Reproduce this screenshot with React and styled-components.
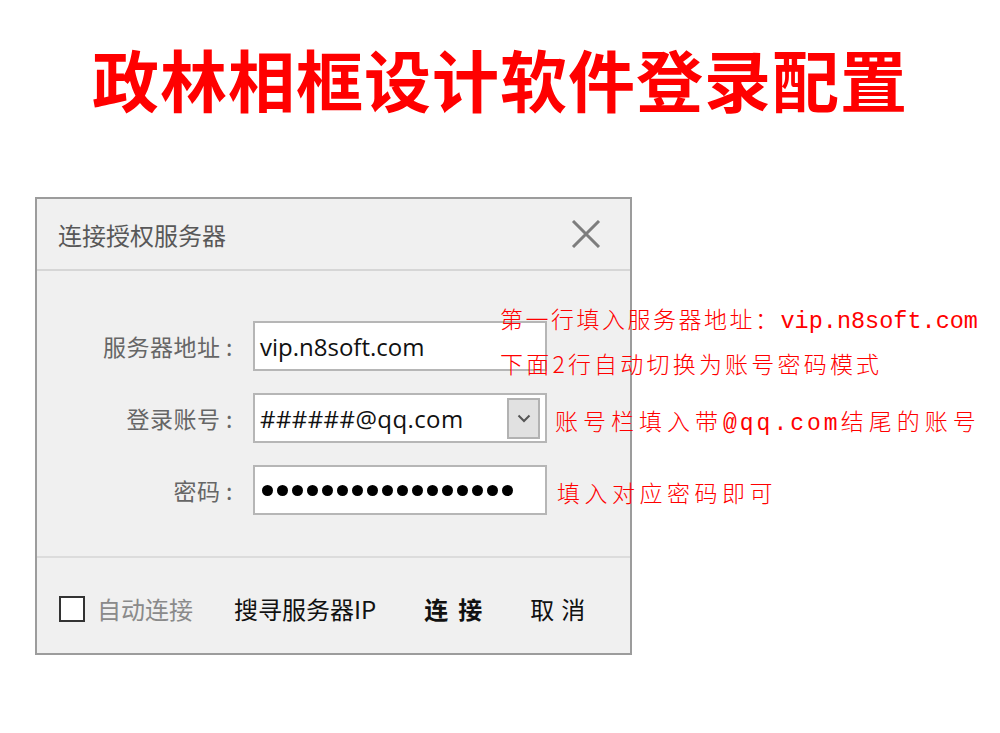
import React from "react";
import styled, { createGlobalStyle } from "styled-components";

const GlobalStyle = createGlobalStyle`
  html, body {
    margin: 0;
    padding: 0;
    background: #ffffff;
  }
  body {
    width: 1000px;
    height: 733px;
    overflow: hidden;
    font-family: "Noto Sans CJK SC", "Noto Sans", sans-serif;
  }
`;

const Page = styled.div`
  position: relative;
  box-sizing: border-box;
  width: 1000px;
  height: 733px;
  padding-top: 38px;
  background: #fff;
`;

const Title = styled.h1`
  margin: 0;
  height: 80px;
  line-height: 80px;
  text-align: center;
  font-family: "Noto Sans CJK SC", sans-serif;
  font-weight: 700;
  font-size: 67px;
  letter-spacing: 1px;
  color: #ff0000;
`;

const Dialog = styled.section`
  margin: 79px 0 0 35px;
  width: 593px;
  height: 454px;
  border: 2px solid #9c9c9c;
  background: #f0f0f0;
  display: flex;
  flex-direction: column;
`;

const Header = styled.header`
  height: 70px;
  flex: none;
  display: flex;
  align-items: center;
  justify-content: space-between;
  padding: 0 29px 0 21px;
  border-bottom: 2px solid #d6d6d6;
`;

const HeaderTitle = styled.span`
  font-size: 24px;
  color: #585858;
`;

const CloseButton = styled.button`
  border: none;
  background: transparent;
  padding: 0;
  width: 30px;
  height: 28px;
  display: flex;
  align-items: center;
  justify-content: center;
  cursor: pointer;
`;

const Body = styled.div`
  flex: none;
  display: grid;
  grid-template-columns: 196px 294px;
  grid-auto-rows: 50px;
  column-gap: 20px;
  row-gap: 22px;
  padding: 50px 0 41px 0;
  border-bottom: 2px solid #dcdcdc;
`;

const Label = styled.label`
  display: flex;
  align-items: center;
  justify-content: flex-end;
  font-size: 23px;
  color: #666;
  letter-spacing: 0.5px;
`;

const Field = styled.div`
  position: relative;
  box-sizing: border-box;
  height: 50px;
  border: 2px solid #b6b6b6;
  background: #fff;
  display: flex;
  align-items: center;
  justify-content: space-between;
  padding: 0 5px 0 5px;
`;

const FieldText = styled.span`
  font-family: "Open Sans", "Noto Sans", sans-serif;
  font-size: 24px;
  color: #111;
  letter-spacing: ${(p) => p.$spacing || "0px"};
`;

const DropButton = styled.span`
  box-sizing: border-box;
  width: 33px;
  height: 41px;
  border: 2px solid #b2b2b2;
  background: #e1e1e1;
  display: flex;
  align-items: center;
  justify-content: center;
`;

const Dots = styled.span`
  display: flex;
  gap: 4px;
  padding-left: 2px;
`;

const Dot = styled.span`
  width: 11px;
  height: 11px;
  border-radius: 50%;
  background: #000;
`;

const Footer = styled.footer`
  flex: 1;
  display: flex;
  align-items: center;
  padding: 6px 0 0 22px;
`;

const CheckWrap = styled.label`
  display: flex;
  align-items: center;
  gap: 12px;
  margin-right: 41px;
`;

const CheckBox = styled.span`
  box-sizing: border-box;
  width: 26px;
  height: 26px;
  border: 2px solid #333;
  background: #fff;
`;

const FooterText = styled.span`
  font-size: 24px;
  color: ${(p) => p.$color || "#111"};
  font-weight: ${(p) => (p.$bold ? 700 : 400)};
  letter-spacing: ${(p) => p.$spacing || "0px"};
  margin-right: ${(p) => p.$gap || "0px"};
`;

const Note = styled.p`
  position: absolute;
  margin: 0;
  left: ${(p) => p.$x}px;
  top: ${(p) => p.$y}px;
  line-height: 30px;
  white-space: nowrap;
  font-family: "Noto Sans CJK SC", sans-serif;
  font-weight: 300;
  font-size: 23px;
  color: #ff0000;
  letter-spacing: ${(p) => p.$spacing}px;
`;

const Latin = styled.span`
  font-family: "Liberation Mono", monospace;
  font-size: ${(p) => p.$size || 23}px;
  letter-spacing: ${(p) => p.$spacing || 0}px;
`;

const CloseIcon = () => (
  <svg width="30" height="28" viewBox="0 0 30 28">
    <path d="M2 1 L28 27 M28 1 L2 27" stroke="#7d7d7d" strokeWidth="3" fill="none" />
  </svg>
);

const Chevron = () => (
  <svg width="14" height="9" viewBox="0 0 14 9">
    <path d="M1.5 1.5 L7 7 L12.5 1.5" stroke="#555" strokeWidth="2" fill="none" />
  </svg>
);

export default function App() {
  return (
    <Page>
      <GlobalStyle />
      <Title>政林相框设计软件登录配置</Title>
      <Dialog>
        <Header>
          <HeaderTitle>连接授权服务器</HeaderTitle>
          <CloseButton aria-label="关闭">
            <CloseIcon />
          </CloseButton>
        </Header>
        <Body>
          <Label>服务器地址 :</Label>
          <Field>
            <FieldText>vip.n8soft.com</FieldText>
          </Field>
          <Label>登录账号 :</Label>
          <Field>
            <FieldText $spacing="0.4px">######@qq.com</FieldText>
            <DropButton>
              <Chevron />
            </DropButton>
          </Field>
          <Label>密码 :</Label>
          <Field>
            <Dots>
              {Array.from({ length: 17 }).map((_, i) => (
                <Dot key={i} />
              ))}
            </Dots>
          </Field>
        </Body>
        <Footer>
          <CheckWrap>
            <CheckBox />
            <FooterText $color="#8a8a8a">自动连接</FooterText>
          </CheckWrap>
          <FooterText $gap="48px">搜寻服务器IP</FooterText>
          <FooterText $bold $spacing="10px" $gap="38px">连接</FooterText>
          <FooterText $spacing="7px">取消</FooterText>
        </Footer>
      </Dialog>

      <Note $x={500} $y={303} $spacing={2.5}>
        第一行填入服务器地址：<Latin $size={23.5}>vip.n8soft.com</Latin>
      </Note>
      <Note $x={500} $y={348} $spacing={3.2}>
        下面2行自动切换为账号密码模式
      </Note>
      <Note $x={555} $y={405} $spacing={5}>
        账号栏填入带<Latin $spacing={3}>@qq.com</Latin>结尾的账号
      </Note>
      <Note $x={557} $y={477} $spacing={4.5}>
        填入对应密码即可
      </Note>
    </Page>
  );
}
